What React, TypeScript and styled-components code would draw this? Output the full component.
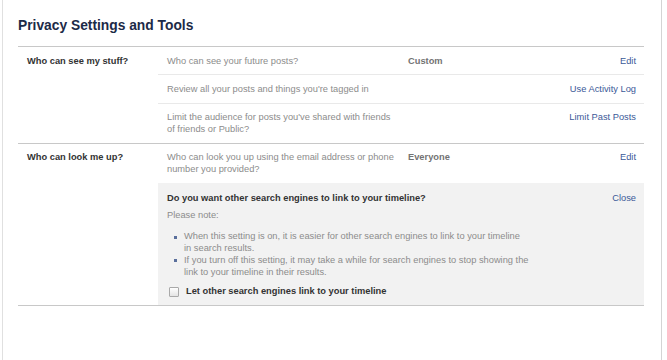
import styled, { createGlobalStyle } from "styled-components";

const GlobalStyle = createGlobalStyle`
  html, body {
    margin: 0;
    padding: 0;
    background: #fff;
  }
  body {
    font-family: "Liberation Sans", Arial, sans-serif;
    font-size: 9.3px;
    line-height: 11.7px;
    color: #8c8c8c;
  }
`;

const Page = styled.div`
  display: flex;
  min-height: 360px;
  padding-left: 2px;
`;

const Frame = styled.div`
  box-sizing: border-box;
  width: 660px;
  min-height: 360px;
  padding: 0 17px 0 15px;
  border-left: 1px solid #e0e0e0;
  border-right: 1px solid #d4d4d4;
`;

const Title = styled.h1`
  margin: 0;
  height: 29px;
  padding-top: 17px;
  font-size: 13.8px;
  line-height: 17px;
  font-weight: bold;
  color: #1c2a47;
  border-bottom: 1px solid #c8c8c8;
`;

const Section = styled.section`
  display: grid;
  grid-template-columns: 140px 1fr;
  border-bottom: 1px solid #c8c8c8;
`;

const SectionLabel = styled.div`
  padding: 8.6px 0 0 9px;
  font-weight: bold;
  color: #333;
`;

const Rows = styled.div`
  display: flex;
  flex-direction: column;
`;

const Row = styled.div`
  display: grid;
  grid-template-columns: 230px 1fr auto;
  column-gap: 11px;
  padding: 8.6px 8px 7px 9px;

  & + & {
    border-top: 1px solid #e9e9e9;
  }
`;

const Value = styled.div`
  font-weight: bold;
  color: #737373;
`;

const Action = styled.a`
  color: #3b5998;
  text-align: right;
  text-decoration: none;
  cursor: pointer;
`;

const Prompt = styled.div`
  background: #f2f2f2;
  padding: 10px 8px 6.6px 9px;
`;

const PromptHead = styled.div`
  display: flex;
  justify-content: space-between;
`;

const PromptTitle = styled.div`
  font-weight: bold;
  color: #333;
`;

const Note = styled.div`
  margin-top: 5.4px;
`;

const Bullets = styled.ul`
  list-style: none;
  width: 345px;
  margin: 10px 0 0;
  padding: 0 0 0 17px;
`;

const Bullet = styled.li`
  position: relative;

  &::before {
    content: "";
    position: absolute;
    left: -10px;
    top: 4.5px;
    width: 3px;
    height: 3px;
    background: #5a6f9c;
  }
`;

const CheckRow = styled.label`
  display: flex;
  align-items: center;
  gap: 7px;
  margin-top: 8px;
  padding-left: 2px;
  font-weight: bold;
  color: #333;
`;

const Check = styled.input`
  appearance: none;
  box-sizing: border-box;
  width: 10px;
  height: 10px;
  margin: 0;
  border: 1px solid #a9a9a9;
  border-radius: 1px;
  background: linear-gradient(#fefefe, #e4e4e4);
`;

const stuffRows = [
  { text: "Who can see your future posts?", value: "Custom", action: "Edit" },
  { text: "Review all your posts and things you're tagged in", value: "", action: "Use Activity Log" },
  {
    text: "Limit the audience for posts you've shared with friends of friends or Public?",
    value: "",
    action: "Limit Past Posts",
  },
];

export default function App() {
  return (
    <>
      <GlobalStyle />
      <Page>
        <Frame>
          <Title>Privacy Settings and Tools</Title>

          <Section>
            <SectionLabel>Who can see my stuff?</SectionLabel>
            <Rows>
              {stuffRows.map((r) => (
                <Row key={r.action}>
                  <div>{r.text}</div>
                  <Value>{r.value}</Value>
                  <Action>{r.action}</Action>
                </Row>
              ))}
            </Rows>
          </Section>

          <Section>
            <SectionLabel>Who can look me up?</SectionLabel>
            <Rows>
              <Row>
                <div>Who can look you up using the email address or phone number you provided?</div>
                <Value>Everyone</Value>
                <Action>Edit</Action>
              </Row>
              <Prompt>
                <PromptHead>
                  <PromptTitle>Do you want other search engines to link to your timeline?</PromptTitle>
                  <Action>Close</Action>
                </PromptHead>
                <Note>Please note:</Note>
                <Bullets>
                  <Bullet>
                    When this setting is on, it is easier for other search engines to link to your timeline in
                    search results.
                  </Bullet>
                  <Bullet>
                    If you turn off this setting, it may take a while for search engines to stop showing the link
                    to your timeline in their results.
                  </Bullet>
                </Bullets>
                <CheckRow>
                  <Check type="checkbox" />
                  Let other search engines link to your timeline
                </CheckRow>
              </Prompt>
            </Rows>
          </Section>
        </Frame>
      </Page>
    </>
  );
}
